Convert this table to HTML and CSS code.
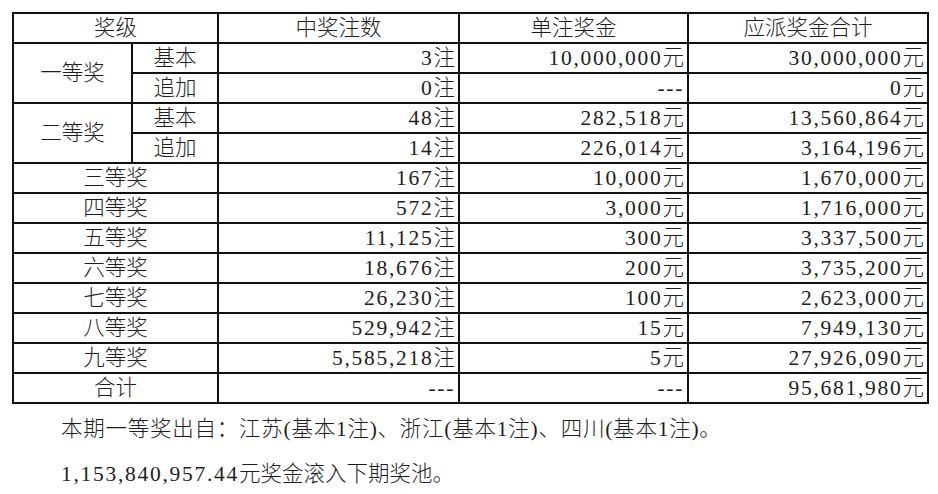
FILE: index.html
```html
<!DOCTYPE html>
<html lang="zh-CN">
<head>
<meta charset="utf-8">
<title>开奖结果</title>
<link rel="stylesheet" href="styles.css">
</head>
<body>
<div class="page">
  <table class="prize">
    <colgroup>
      <col class="c1"><col class="c2"><col class="c3"><col class="c4"><col class="c5">
    </colgroup>
    <thead>
      <tr><th colspan="2">奖级</th><th>中奖注数</th><th>单注奖金</th><th>应派奖金合计</th></tr>
    </thead>
    <tbody>
      <tr><td rowspan="2" class="ctr">一等奖</td><td class="ctr">基本</td><td class="r"><span class="n">3</span>注</td><td class="r"><span class="n">10,000,000</span>元</td><td class="r"><span class="n">30,000,000</span>元</td></tr>
      <tr><td class="ctr">追加</td><td class="r"><span class="n">0</span>注</td><td class="r"><span class="n">---</span></td><td class="r"><span class="n">0</span>元</td></tr>
      <tr><td rowspan="2" class="ctr">二等奖</td><td class="ctr">基本</td><td class="r"><span class="n">48</span>注</td><td class="r"><span class="n">282,518</span>元</td><td class="r"><span class="n">13,560,864</span>元</td></tr>
      <tr><td class="ctr">追加</td><td class="r"><span class="n">14</span>注</td><td class="r"><span class="n">226,014</span>元</td><td class="r"><span class="n">3,164,196</span>元</td></tr>
      <tr><td colspan="2" class="ctr">三等奖</td><td class="r"><span class="n">167</span>注</td><td class="r"><span class="n">10,000</span>元</td><td class="r"><span class="n">1,670,000</span>元</td></tr>
      <tr><td colspan="2" class="ctr">四等奖</td><td class="r"><span class="n">572</span>注</td><td class="r"><span class="n">3,000</span>元</td><td class="r"><span class="n">1,716,000</span>元</td></tr>
      <tr><td colspan="2" class="ctr">五等奖</td><td class="r"><span class="n">11,125</span>注</td><td class="r"><span class="n">300</span>元</td><td class="r"><span class="n">3,337,500</span>元</td></tr>
      <tr><td colspan="2" class="ctr">六等奖</td><td class="r"><span class="n">18,676</span>注</td><td class="r"><span class="n">200</span>元</td><td class="r"><span class="n">3,735,200</span>元</td></tr>
      <tr><td colspan="2" class="ctr">七等奖</td><td class="r"><span class="n">26,230</span>注</td><td class="r"><span class="n">100</span>元</td><td class="r"><span class="n">2,623,000</span>元</td></tr>
      <tr><td colspan="2" class="ctr">八等奖</td><td class="r"><span class="n">529,942</span>注</td><td class="r"><span class="n">15</span>元</td><td class="r"><span class="n">7,949,130</span>元</td></tr>
      <tr><td colspan="2" class="ctr">九等奖</td><td class="r"><span class="n">5,585,218</span>注</td><td class="r"><span class="n">5</span>元</td><td class="r"><span class="n">27,926,090</span>元</td></tr>
      <tr><td colspan="2" class="ctr">合计</td><td class="r"><span class="n">---</span></td><td class="r"><span class="n">---</span></td><td class="r"><span class="n">95,681,980</span>元</td></tr>
    </tbody>
  </table>
  <div class="notes">
    <p class="spaced">本期一等奖出自：江苏(基本1注)、浙江(基本1注)、四川(基本1注)。</p>
    <p><span class="n">1,153,840,957.44</span>元奖金滚入下期奖池。</p>
  </div>
</div>
</body>
</html>
```

FILE: styles.css
```css
html, body {
  margin: 0;
  padding: 0;
  background: #ffffff;
}

body {
  font-family: "Liberation Serif", "Noto Sans CJK SC", serif;
  font-size: 21.5px;
  font-weight: 300;
  color: #1e1e1e;
}

.page {
  padding: 12px 0 0 12px;
}

.prize {
  border-collapse: collapse;
  table-layout: fixed;
  width: 915px;
}

.c1 { width: 119px; }
.c2 { width: 86px; }
.c3 { width: 241px; }
.c4 { width: 229px; }
.c5 { width: 240px; }

.prize th,
.prize td {
  border: 2px solid #111111;
  height: 28px;
  line-height: 28px;
  padding: 0 3px;
  font-weight: 300;
  white-space: nowrap;
  overflow: hidden;
}

.prize th,
.prize .ctr {
  text-align: center;
}

.prize .r {
  text-align: right;
}

.n {
  letter-spacing: 0.08em;
}

.notes {
  padding-left: 49px;
  margin-top: 3px;
}

.notes p {
  margin: 0;
  line-height: 45px;
}

.notes .spaced {
  letter-spacing: 0.035em;
}
```
